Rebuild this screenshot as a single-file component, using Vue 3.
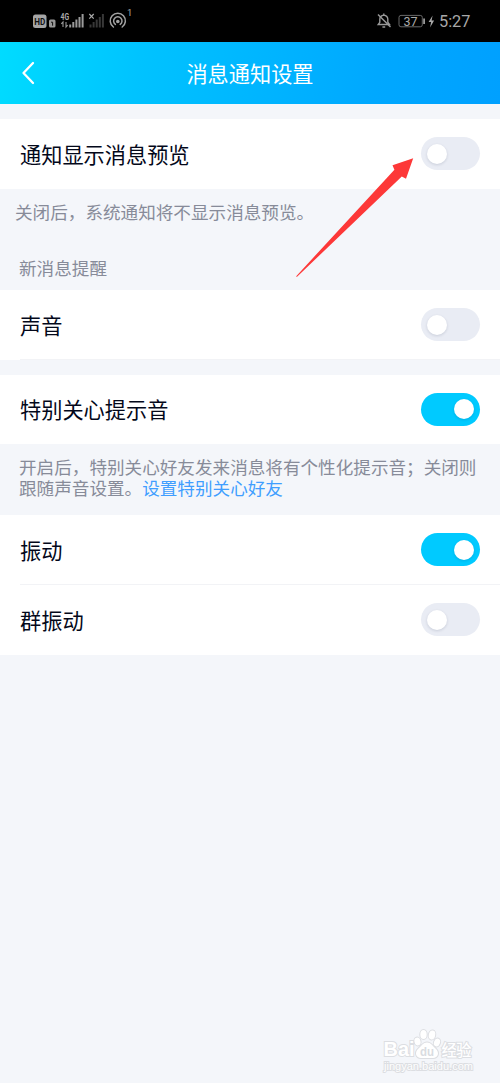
<template>
  <div class="page">
    <div class="status">
      <svg class="status-left" viewBox="0 0 112 42" width="112" height="42">
        <rect x="13" y="14.5" width="13.5" height="13.5" rx="2.5" fill="#a5a5a5" />
        <text x="14.3" y="24.8" class="hd" textLength="11" lengthAdjust="spacingAndGlyphs">HD</text>
        <rect x="29" y="19.5" width="6.5" height="8" rx="1.5" fill="#999" />
        <path d="M31 22.2h1.6v3.5" fill="none" stroke="#111" />
        <text x="40.5" y="19.8" class="net" textLength="8.5" lengthAdjust="spacingAndGlyphs">4G</text>
        <path d="M43 27v-5l-1.7 1.8M46 22v5l1.7-1.8" fill="none" stroke="#999" stroke-width="1.1" />
        <rect
          v-for="(bar, i) in bars"
          :key="'a' + i"
          :x="49.2 + i * 3.1"
          :y="27.5 - bar"
          width="2"
          :height="bar"
          fill="#9a9a9a"
        />
        <path d="M69.3 14l4.4 4.6M73.7 14l-4.4 4.6" stroke="#aaa" stroke-width="1.2" />
        <rect
          v-for="(bar, i) in bars"
          :key="'b' + i"
          :x="69.5 + i * 3.1"
          :y="27.5 - bar"
          width="2"
          :height="bar"
          fill="#383838"
        />
        <g fill="none" stroke="#a2a2a2" stroke-width="1.5" stroke-linecap="round">
          <path d="M93.4 27a7.6 7.6 0 1 1 8.8 0" />
          <path d="M95.4 24.4a4.2 4.2 0 1 1 4.8 0" />
        </g>
        <circle cx="97.8" cy="21.5" r="1.8" fill="#a2a2a2" />
        <text x="107" y="15.8" class="sup">1</text>
      </svg>
      <svg class="status-right" viewBox="0 0 62 42" width="62" height="42">
        <g fill="none" stroke="#999" stroke-width="1.4">
          <path d="M8.2 24.5h11.3l-1.7-2.2v-3c0-2.2-1.4-3.8-4-4.2-2.6.4-4 2-4 4.2v3zM12.4 27h2.8M13.8 13.6v1.500" />
          <path d="M8 14.5L20.5 27" />
        </g>
        <rect x="29" y="15.4" width="23.3" height="11.4" rx="2" fill="none" stroke="#686868" />
        <rect x="53.2" y="18.5" width="1.8" height="5.5" fill="#999" />
        <text x="40.6" y="25.6" class="level" text-anchor="middle">37</text>
        <path d="M62.6 15.5l-4 6.5h2.500l-1 5.500 4-7h-2.500z" fill="#aaa" />
      </svg>
      <span class="time">5:27</span>
    </div>

    <header class="header">
      <svg class="back" viewBox="0 0 14 24" width="14" height="24">
        <path d="M12 2L2.500 12l9.500 10" />
      </svg>
      <h1>消息通知设置</h1>
    </header>

    <main class="settings">
      <section class="group">
        <div class="row">
          <span>通知显示消息预览</span>
          <button class="switch" :class="{ on: state.preview }" @click="toggle('preview')"></button>
        </div>
      </section>
      <p class="hint">关闭后，系统通知将不显示消息预览。</p>
      <h2 class="caption">新消息提醒</h2>

      <section class="group sound">
        <div class="row">
          <span>声音</span>
          <button class="switch" :class="{ on: state.sound }" @click="toggle('sound')"></button>
        </div>
      </section>

      <section class="group">
        <div class="row">
          <span>特别关心提示音</span>
          <button class="switch" :class="{ on: state.care }" @click="toggle('care')"></button>
        </div>
      </section>
      <p class="note">
        开启后，特别关心好友发来消息将有个性化提示音；关闭则<br />跟随声音设置。<a>设置特别关心好友</a>
      </p>

      <section class="group">
        <div v-for="item in vibrations" :key="item.key" class="row">
          <span>{{ item.label }}</span>
          <button class="switch" :class="{ on: state[item.key] }" @click="toggle(item.key)"></button>
        </div>
      </section>
    </main>

    <svg class="pointer" viewBox="0 0 120 120" width="120" height="120">
      <path d="M1.2 116.2L99.4 9.7 97.5 5.3 118.2-1.8 111 18.8 106.8 16.6 1.8 117z" />
    </svg>

    <svg class="watermark" viewBox="0 0 100 50" width="100" height="50">
      <g class="mark">
        <text x="3.5" y="27.3" class="brand" textLength="31" lengthAdjust="spacingAndGlyphs">Bai</text>
        <path d="M47 13.500c4 0 5.500 3.500 8.500 6 4.500 4 2.500 9.500-2.500 9.500h-12c-5 0-7-5.500-2.500-9.500 3-2.500 4.500-6 8.500-6z" />
        <ellipse cx="37.500" cy="12.500" rx="3" ry="4" transform="rotate(-15 37.500 12.500)" />
        <ellipse cx="43.500" cy="5.500" rx="3.200" ry="4.500" />
        <ellipse cx="52" cy="6" rx="3.200" ry="4.500" transform="rotate(12 52 6)" />
        <ellipse cx="57" cy="13.500" rx="3" ry="4" transform="rotate(20 57 13.500)" />
        <text x="61.500" y="27" class="cn" textLength="30">经验</text>
        <text x="4" y="40.500" class="url" textLength="89" lengthAdjust="spacingAndGlyphs">jingyan.baidu.com</text>
      </g>
      <text x="40" y="26.500" class="du" textLength="14" lengthAdjust="spacingAndGlyphs">du</text>
    </svg>
  </div>
</template>

<script setup>
import { reactive } from 'vue'

const bars = [3, 5.5, 8, 10.5, 13.5]

const vibrations = [
  { key: 'vibrate', label: '振动' },
  { key: 'groupVibrate', label: '群振动' }
]

const state = reactive({
  preview: false,
  sound: false,
  care: true,
  vibrate: true,
  groupVibrate: false
})

function toggle(key) {
  state[key] = !state[key]
}
</script>

<style>
body {
  margin: 0;
  background: #f4f6fa;
}
</style>

<style scoped>
.page {
  position: relative;
  width: 500px;
  height: 1083px;
  overflow: hidden;
  background: #f4f6fa;
  color: #03081a;
  font-family: "Noto Sans CJK SC", sans-serif;
}
.status {
  display: flex;
  align-items: center;
  height: 42px;
  padding: 0 30px 0 20px;
  box-sizing: border-box;
  background: #000;
}
.status svg {
  overflow: visible;
}
.status-right {
  margin-left: auto;
  margin-right: 7px;
}
.status text {
  font-family: Roboto, sans-serif;
  fill: #aaa;
}
.status .hd {
  font-size: 9.5px;
  font-weight: 700;
  fill: #111;
}
.status .net {
  font-size: 8.5px;
  font-weight: 700;
}
.status .sup {
  font-size: 9.5px;
}
.status .level {
  font-size: 12.5px;
}
.time {
  width: 31px;
  padding-top: 2px;
  color: #a8a8a8;
  font: 16.3px/40px Roboto, sans-serif;
  white-space: nowrap;
}
.header {
  display: grid;
  grid-template-columns: 21px 1fr 21px;
  align-items: center;
  height: 62px;
  padding: 0 20px;
  background: linear-gradient(100deg, #00dcff 0%, #00c3ff 28%, #00a8ff 75%, #00a0ff 100%);
}
.back {
  margin-left: 1px;
  fill: none;
  stroke: #fff;
  stroke-width: 2.3;
  stroke-linecap: round;
  stroke-linejoin: round;
}
.header h1 {
  margin: 0;
  text-align: center;
  color: #fff;
  font-size: 21.2px;
  font-weight: 400;
  line-height: 30px;
}
.settings {
  padding-top: 15px;
}
.group {
  background: #fff;
}
.row {
  position: relative;
  display: flex;
  align-items: center;
  justify-content: space-between;
  height: 70px;
  padding: 0 20px 1px;
  box-sizing: border-box;
  font-size: 21.2px;
}
.row > span {
  padding-bottom: 1px;
}
.row + .row::before {
  content: "";
  position: absolute;
  top: -1px;
  left: 20px;
  right: 0;
  height: 1px;
  background: #f2f3f6;
}
.sound {
  margin-bottom: 15px;
}
.sound .row::after {
  content: "";
  position: absolute;
  bottom: 0;
  left: 20px;
  right: 0;
  height: 1px;
  background: #f2f3f6;
}
.sound + .group .row {
  height: 69px;
}
.switch {
  display: flex;
  align-items: center;
  width: 59px;
  height: 33px;
  padding: 0 6px;
  border: 0;
  border-radius: 17px;
  background: #e9ecf4;
}
.switch::before {
  content: "";
  width: 20px;
  height: 20px;
  border-radius: 50%;
  background: #fff;
  box-shadow: 0 1px 3px rgba(0, 20, 60, 0.14);
}
.switch.on {
  justify-content: flex-end;
  background: #00caff;
}
.hint,
.note,
.caption {
  margin: 0;
  padding: 12px 19px 0;
  box-sizing: border-box;
  color: #878b99;
  font-size: 17.6px;
  font-weight: 400;
  line-height: 21px;
  white-space: nowrap;
}
.hint {
  height: 56px;
  padding-left: 15px;
}
.caption {
  height: 45px;
}
.note {
  height: 71px;
}
.note a {
  color: #409eff;
}
.pointer {
  position: absolute;
  left: 295px;
  top: 160px;
  overflow: visible;
}
.pointer path {
  fill: #fd3838;
}
.watermark {
  position: absolute;
  left: 380px;
  top: 1029px;
}
.mark {
  fill: #fff;
  stroke: #dcdee2;
  stroke-width: 2;
  paint-order: stroke;
}
.brand {
  font: 700 20px "Liberation Sans", sans-serif;
}
.cn {
  font-size: 15.5px;
  font-weight: 500;
}
.url {
  font: 11px "Liberation Sans", sans-serif;
}
.du {
  fill: #d9dce1;
  font: 700 13px "Liberation Sans", sans-serif;
}
</style>
